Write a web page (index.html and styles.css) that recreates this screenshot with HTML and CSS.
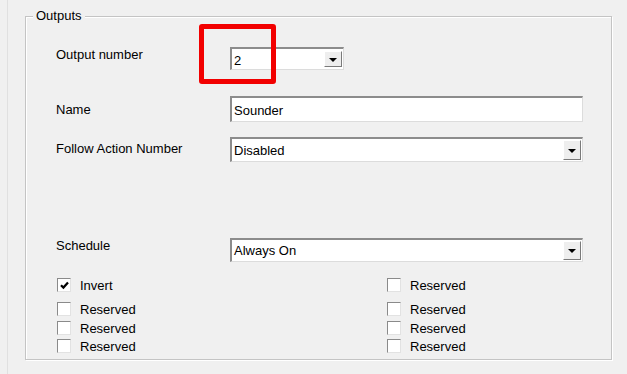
FILE: index.html
```html
<!DOCTYPE html>
<html>
<head>
<meta charset="utf-8">
<link rel="stylesheet" href="styles.css">
</head>
<body>
<div class="window">
  <div class="group">
    <span class="legend">Outputs</span>
    <div class="row row-output">
      <span class="label">Output number</span>
      <div class="combo combo-small"><span class="value">2</span><span class="drop"><span class="tri"></span></span></div>
    </div>
    <div class="row row-name">
      <span class="label label-name">Name</span>
      <div class="textbox"><span class="value">Sounder</span></div>
    </div>
    <div class="row row-follow">
      <span class="label label-follow">Follow Action Number</span>
      <div class="combo combo-wide"><span class="value">Disabled</span><span class="drop"><span class="tri"></span></span></div>
    </div>
    <div class="row row-schedule">
      <span class="label">Schedule</span>
      <div class="combo combo-wide combo-sched"><span class="value">Always On</span><span class="drop"><span class="tri"></span></span></div>
    </div>
    <div class="checks">
      <div class="check r1"><span class="box checked"><svg width="9" height="9" viewBox="0 0 9 9"><path d="M1 4.2 L3.4 6.6 L8 1.4" fill="none" stroke="#000" stroke-width="2.2"/></svg></span><span>Invert</span></div>
      <div class="check r1"><span class="box"></span><span>Reserved</span></div>
      <div class="check r2"><span class="box"></span><span>Reserved</span></div>
      <div class="check r2"><span class="box"></span><span>Reserved</span></div>
      <div class="check r3"><span class="box"></span><span>Reserved</span></div>
      <div class="check r3"><span class="box"></span><span>Reserved</span></div>
      <div class="check r4"><span class="box"></span><span>Reserved</span></div>
      <div class="check r4"><span class="box"></span><span>Reserved</span></div>
    </div>
    <div class="highlight"></div>
  </div>
</div>
</body>
</html>
```
FILE: styles.css
```css
html, body {
  margin: 0;
  padding: 0;
  background: #f0f0f0;
}
body {
  font-family: "Liberation Sans", Arial, sans-serif;
  font-size: 13px;
  line-height: 15px;
  color: #000;
  width: 627px;
  height: 374px;
  overflow: hidden;
}
.window {
  margin-left: 7px;
  height: 374px;
  box-sizing: border-box;
  border-left: 1px solid #e0e0e0;
  padding-left: 17px;
  padding-top: 16px;
}
.group {
  position: relative;
  box-sizing: border-box;
  width: 587px;
  height: 344px;
  border: 1px solid #c4c4c4;
  box-shadow: inset 1px 1px 0 #fff, 1px 1px 0 #fff;
  padding-left: 30px;
  padding-top: 30px;
}
.legend {
  position: absolute;
  top: -9px;
  left: 7px;
  padding: 0 3px;
  background: #f0f0f0;
}
.row {
  display: flex;
  align-items: flex-start;
}
.label {
  width: 174px;
  flex: none;
}
.label-name { margin-top: 6px; }
.label-follow { margin-top: 4px; }
.row-name { margin-top: 26px; }
.row-follow { margin-top: 15px; }
.row-schedule { margin-top: 76px; }

.combo, .textbox {
  position: relative;
  box-sizing: border-box;
  background: #fff;
  border-top: 2px solid #8c8c8c;
  border-left: 2px solid #8c8c8c;
  border-right: 1px solid #dcdcdc;
  border-bottom: 1px solid #dcdcdc;
  display: flex;
  align-items: center;
  padding-left: 2px;
}
.combo-small { width: 114px; height: 23px; padding-top: 2px; }
.combo-wide { width: 353px; height: 25px; }
.combo-sched { height: 24px; }
.textbox { width: 353px; height: 26px; padding-top: 1px; }
.value {
  flex: 1;
}
.drop {
  box-sizing: border-box;
  width: 18px;
  height: calc(100% - 2px);
  margin-right: 1px;
  background: #eeeeee;
  border-top: 1px solid #fff;
  border-left: 1px solid #fff;
  border-right: 1px solid #7a7a7a;
  border-bottom: 1px solid #7a7a7a;
  display: flex;
  align-items: center;
  justify-content: center;
}
.combo-small .drop { margin-top: -2px; }
.tri {
  width: 0;
  height: 0;
  border-left: 4px solid transparent;
  border-right: 4px solid transparent;
  border-top: 4px solid #000;
  margin-top: 1px;
}
.checks {
  margin-top: 16px;
  margin-left: 1px;
  display: grid;
  grid-template-columns: 330px 1fr;
  grid-template-rows: 24px 19px 18px 15px;
}
.check {
  display: flex;
  align-items: center;
  gap: 9px;
  height: 14px;
}
.box {
  box-sizing: border-box;
  width: 14px;
  height: 14px;
  background: #fff;
  border-top: 1px solid #8a8a8a;
  border-left: 1px solid #8a8a8a;
  border-right: 1px solid #e2e2e2;
  border-bottom: 1px solid #e2e2e2;
  display: flex;
  align-items: center;
  justify-content: center;
}
.highlight {
  position: absolute;
  left: 173px;
  top: 7px;
  width: 77px;
  height: 60px;
  box-sizing: border-box;
  border: 5px solid #f20000;
  border-radius: 3px;
}
```
